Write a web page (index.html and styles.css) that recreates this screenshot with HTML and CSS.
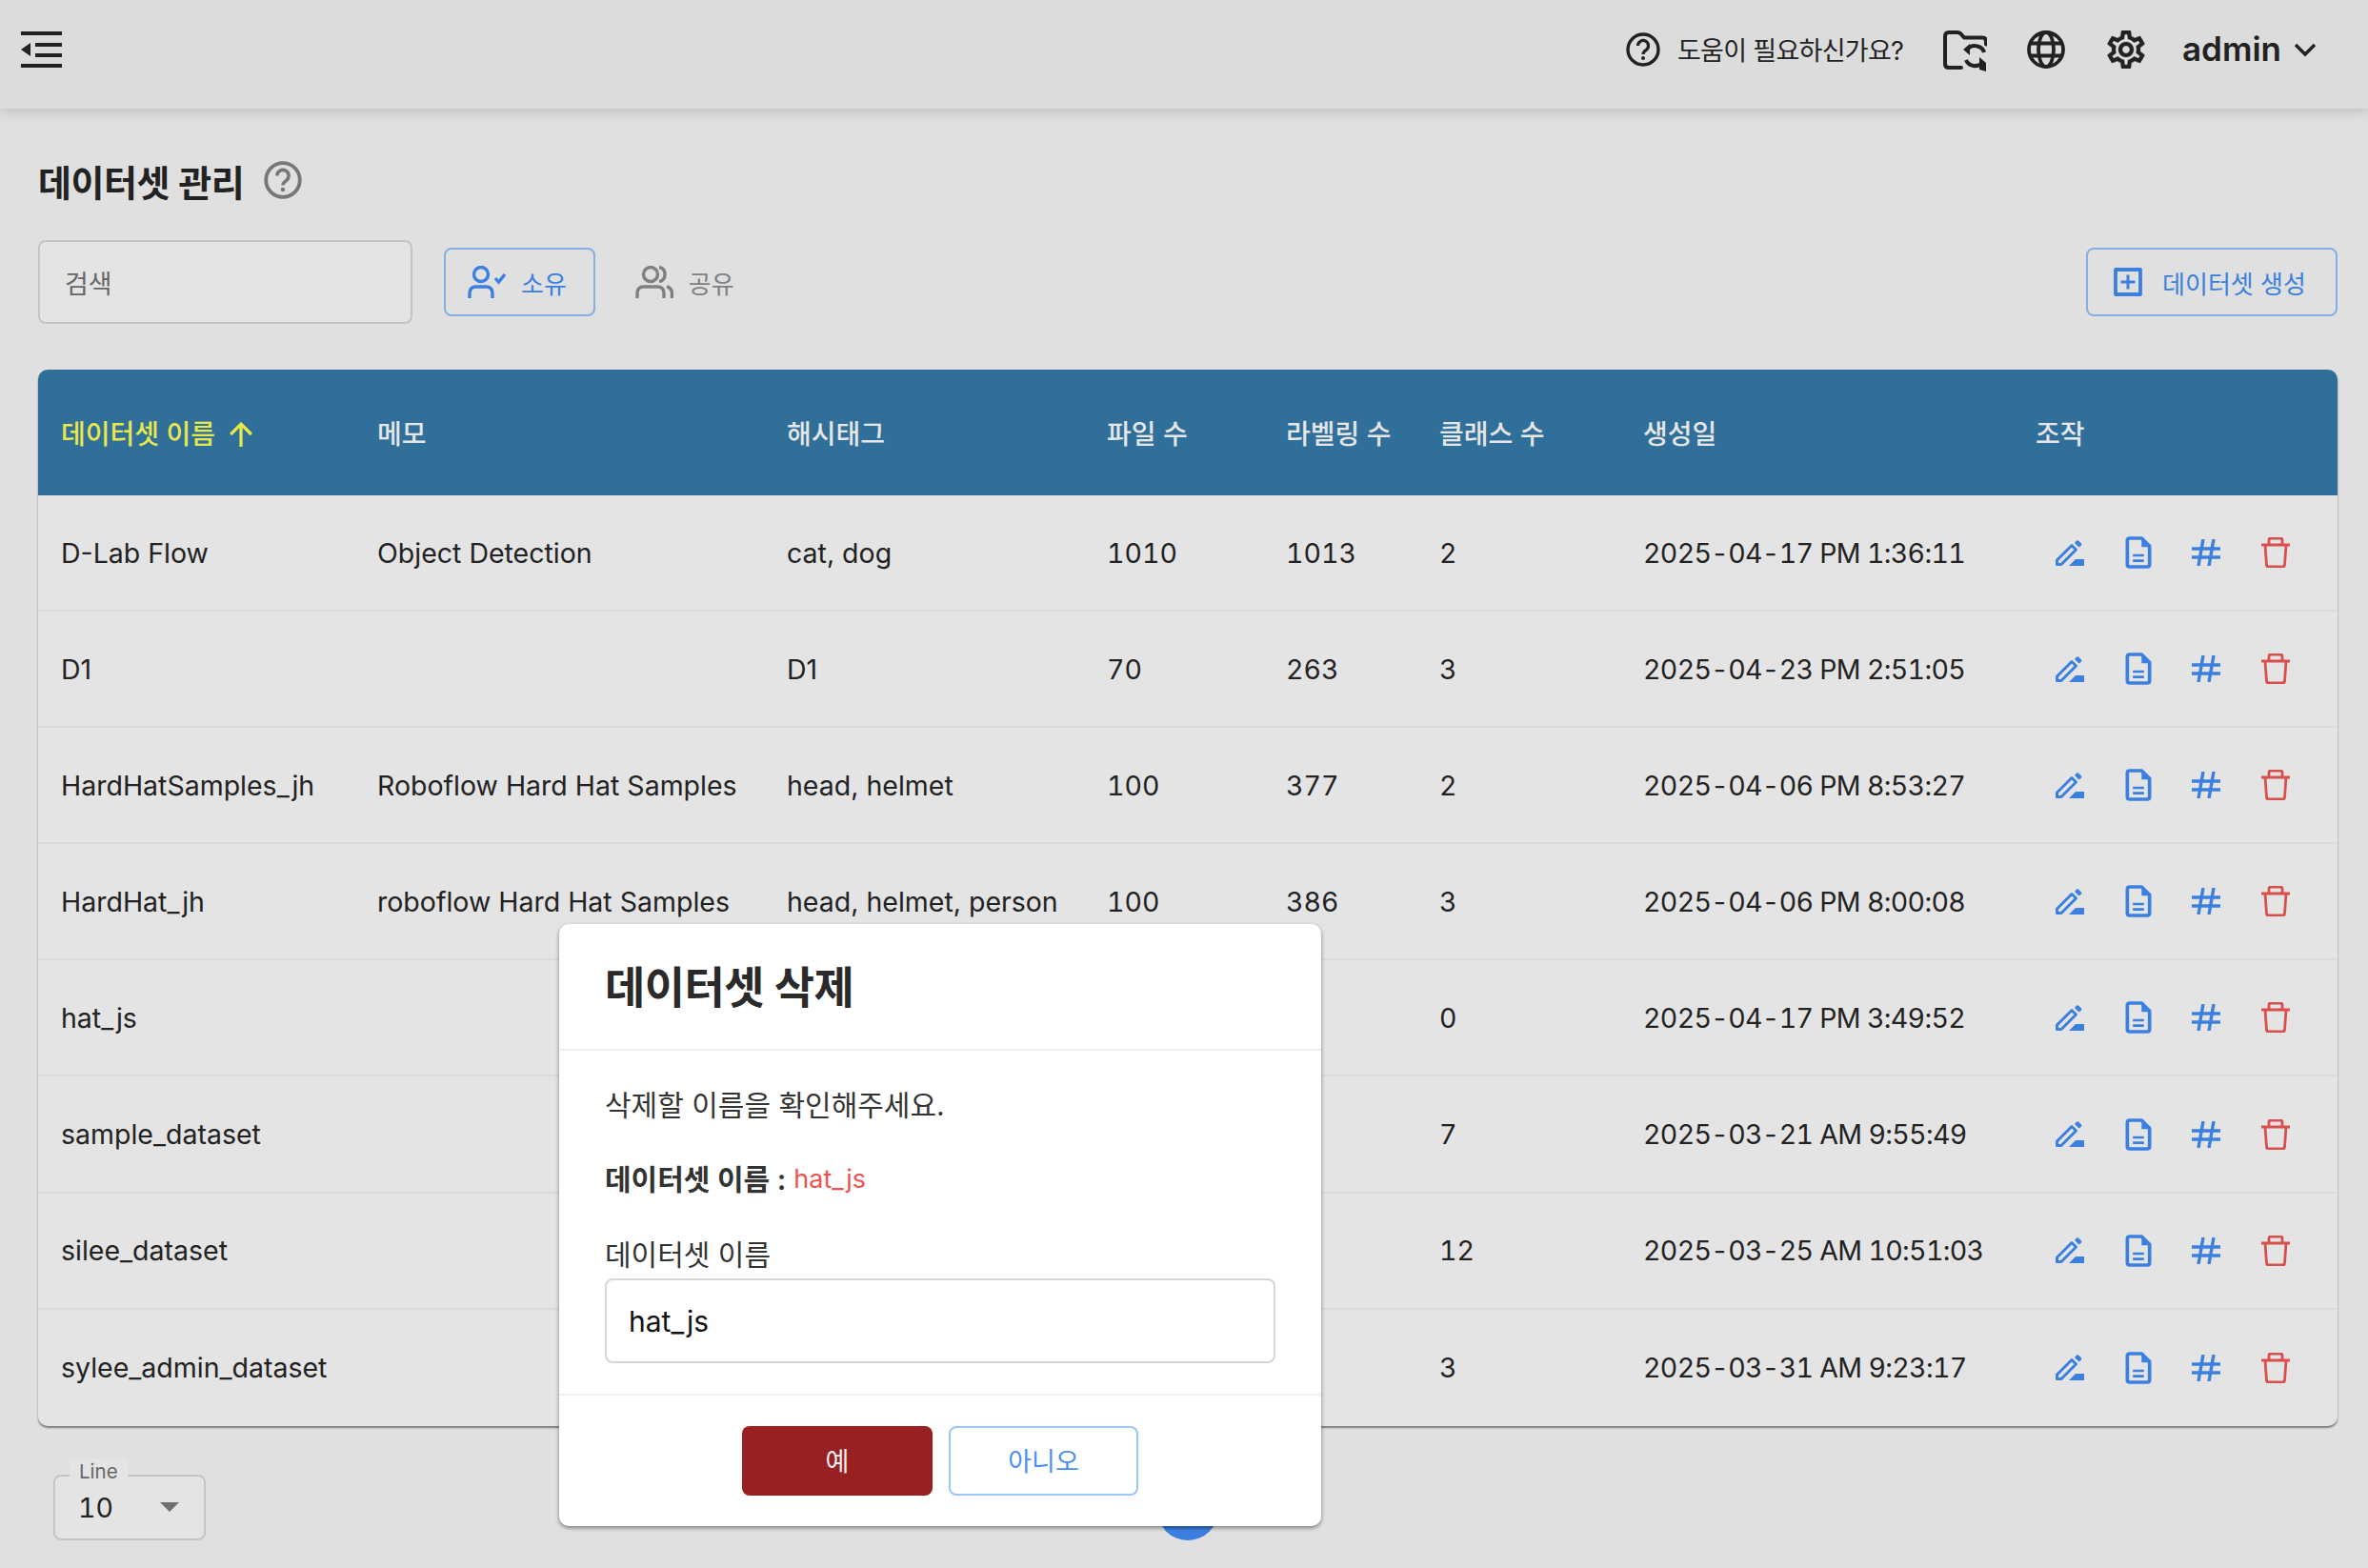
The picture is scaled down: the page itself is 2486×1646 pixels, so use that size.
FILE: index.html
```html
<!DOCTYPE html>
<html lang="ko">
<head>
  <meta charset="UTF-8">
  <title>데이터셋 관리</title>
  <link rel="stylesheet" href="styles.css">
</head>
<body>

<svg class="sprites" xmlns="http://www.w3.org/2000/svg">
  <symbol id="i-edit" viewBox="0 0 30 27">
    <path d="M1.500 25.500v-4.500L17 5.500l4.500 4.500L6 25.500z" fill="none" stroke="currentColor" stroke-width="3" stroke-linejoin="round"/>
    <path d="M20 3l2-2.400q1-.6 2 0l3 3q.6 1 0 2l-2.400 2z" fill="currentColor"/>
    <path d="M14 27l7-7h9v7z" fill="currentColor"/>
  </symbol>
  <symbol id="i-doc" viewBox="0 0 24 24">
    <path d="M14 3H6.500Q5 3 5 4.500v15Q5 21 6.500 21h11q1.500 0 1.500-1.500V8z" fill="none" stroke="currentColor" stroke-width="2.200" stroke-linejoin="round"/>
    <path d="M14 2.500L19.500 8.500H14z" fill="currentColor"/>
    <path d="M8.500 13h7v1.600h-7zM8.500 16.400h7V18h-7z" fill="currentColor"/>
  </symbol>
  <symbol id="i-hash" viewBox="0 0 30 28">
    <path d="M0 10h30M0 19h30M12 0L7 28M23 0l-5 28" fill="none" stroke="currentColor" stroke-width="3.400"/>
  </symbol>
  <symbol id="i-trash" viewBox="0 0 30 32">
    <path d="M0 8h30M4 8l1.500 21q.2 2 2 2h15q1.800 0 2-2L26 8M8 8V3q0-2 2-2h10q2 0 2 2v5" fill="none" stroke="currentColor" stroke-width="2.800" stroke-linejoin="round"/>
  </symbol>
  <symbol id="i-help" viewBox="0 0 36 36">
    <circle cx="18" cy="18" r="16" fill="none" stroke="currentColor" stroke-width="3.400"/>
    <path d="M12.500 14a5.500 5.500 0 1 1 8.500 4.600c-1.800 1.200-3 2-3 4.400" fill="none" stroke="currentColor" stroke-width="3.200"/>
    <circle cx="18" cy="27" r="2" fill="currentColor"/>
  </symbol>
</svg>

<header class="topbar">
  <svg class="menu-icon" viewBox="0 0 43 38">
    <path d="M0 0h43v4H0zM15 12h28v4H15zM15 23h28v4H15zM0 34h43v4H0zM0 19l10-7v14z" fill="#222"/>
  </svg>
  <div class="top-right">
    <svg class="top-help"><use href="#i-help"/></svg>
    <span class="help-text">도움이 필요하신가요?</span>
    <svg class="folder-icon" viewBox="0 0 46 44">
      <path d="M19 39H6q-4 0-4-4V6q0-4 4-4h9q2 0 3.500 1.500L22 7.500h19q4 0 4 4v3" fill="none" stroke="#222" stroke-width="4" stroke-linecap="round" stroke-linejoin="round"/>
      <path d="M43 23a10 9 0 0 0-17-4M24 31a10 9 0 0 0 17 3" fill="none" stroke="#222" stroke-width="4"/>
      <path d="M21 20l7-6v12zM45 34l-7-6v13l7 2z" fill="#222"/>
    </svg>
    <svg class="globe-icon" viewBox="0 0 40 40" fill="none" stroke="#222" stroke-width="3.800">
      <circle cx="20" cy="20" r="18"/>
      <ellipse cx="20" cy="20" rx="8" ry="18"/>
      <path d="M4 13.500h32M4 26.500h32"/>
    </svg>
    <svg class="gear-icon" viewBox="2 2 20 20">
      <path fill="#222" stroke="#222" stroke-width=".15" d="M19.430 12.980c.04-.32.07-.64.07-.98 0-.34-.03-.66-.07-.98l2.110-1.650c.19-.15.24-.42.12-.64l-2-3.460c-.09-.16-.26-.25-.44-.25-.06 0-.12.01-.17.03l-2.490 1c-.52-.4-1.080-.73-1.690-.98l-.38-2.650C14.460 2.180 14.250 2 14 2h-4c-.25 0-.46.18-.49.42l-.38 2.650c-.61.25-1.170.59-1.690.98l-2.490-1c-.06-.02-.12-.03-.18-.03-.17 0-.34.09-.43.25l-2 3.460c-.13.22-.07.49.12.64l2.110 1.650c-.04.32-.07.65-.07.98 0 .33.03.66.07.98l-2.110 1.650c-.19.15-.24.42-.12.64l2 3.460c.09.16.26.25.44.25.06 0 .12-.01.17-.03l2.490-1c.52.4 1.080.73 1.690.98l.38 2.650c.03.24.24.42.49.42h4c.25 0 .46-.18.49-.42l.38-2.650c.61-.25 1.170-.59 1.690-.98l2.490 1c.06.02.12.03.18.03.17 0 .34-.09.43-.25l2-3.460c.12-.22.07-.49-.12-.64l-2.110-1.650zm-1.980-1.710c.04.31.05.52.05.73 0 .21-.02.43-.05.73l-.14 1.130.89.7 1.080.84-.7 1.210-1.270-.51-1.040-.42-.9.68c-.43.32-.84.56-1.250.73l-1.060.43-.16 1.130-.2 1.350h-1.400l-.19-1.350-.16-1.130-1.060-.43c-.43-.18-.83-.41-1.230-.71l-.91-.7-1.060.43-1.270.51-.7-1.210 1.080-.84.89-.7-.14-1.130c-.03-.31-.05-.54-.05-.74s.02-.43.05-.73l.14-1.130-.89-.7-1.080-.84.7-1.210 1.270.51 1.040.42.9-.68c.43-.32.84-.56 1.250-.73l1.060-.43.16-1.130.2-1.350h1.390l.19 1.350.16 1.130 1.060.43c.43.18.83.41 1.230.71l.91.7 1.060-.43 1.270-.51.7 1.210-1.070.85-.89.7.14 1.130zM12 8c-2.210 0-4 1.790-4 4s1.790 4 4 4 4-1.790 4-4-1.790-4-4-4zm0 6c-1.100 0-2-.9-2-2s.9-2 2-2 2 .9 2 2-.9 2-2 2z"/>
    </svg>
    <span class="user-name">admin</span>
    <svg class="user-chevron" viewBox="0 0 24 15"><path d="M2 2l10 10L22 2" fill="none" stroke="#222" stroke-width="3.400"/></svg>
  </div>
</header>

<main class="content">
  <div class="title-row">
    <h1>데이터셋 관리</h1>
    <svg class="title-help"><use href="#i-help"/></svg>
  </div>

  <div class="toolbar">
    <div class="search">검색</div>
    <button class="filter filter-on">
      <svg class="user-icon" viewBox="0 0 40 34" fill="none" stroke="currentColor" stroke-width="3.400">
        <circle cx="14" cy="9" r="7.500"/>
        <path d="M2 34v-5q0-7 7-7h10q7 0 7 7v5"/>
        <path d="M29 13l3.500 4L39 9"/>
      </svg>
      소유
    </button>
    <button class="filter">
      <svg class="user-icon" viewBox="0 0 40 34" fill="none" stroke="currentColor" stroke-width="3.400">
        <circle cx="16" cy="9" r="7.500"/>
        <path d="M2 34v-5q0-7 7-7h14q7 0 7 7v5"/>
        <path d="M25 1.500q6 1 6 7.500t-6 7.500M33 22q5 1 5.500 7v5"/>
      </svg>
      공유
    </button>
    <button class="create-btn">
      <svg class="plus-icon" viewBox="0 0 30 30">
        <path d="M2 2h26v26H2z" fill="none" stroke="currentColor" stroke-width="3.800" stroke-linejoin="round"/>
        <path d="M15 7.500v15M7.500 15h15" stroke="currentColor" stroke-width="3"/>
      </svg>
      데이터셋 생성
    </button>
  </div>

  <table class="data-table">
    <colgroup>
      <col class="c-name"><col class="c-memo"><col class="c-tag"><col class="c-file">
      <col class="c-label"><col class="c-class"><col class="c-date"><col class="c-act">
    </colgroup>
    <thead>
      <tr>
        <th class="sorted">데이터셋 이름
          <svg class="sort-arrow" viewBox="0 0 24 24"><path d="M12 24V2M2 12L12 2l10 10" fill="none" stroke="currentColor" stroke-width="3"/></svg>
        </th>
        <th>메모</th><th>해시태그</th><th>파일 수</th><th>라벨링 수</th><th>클래스 수</th><th>생성일</th><th>조작</th>
      </tr>
    </thead>
    <tbody>
      <tr>
        <td>D-Lab Flow</td><td>Object Detection</td><td>cat, dog</td><td class="num">1010</td><td class="num">1013</td><td class="num">2</td><td class="num">2025-04-17 PM 1:36:11</td>
        <td><div class="actions"><svg class="a-edit"><use href="#i-edit"/></svg><svg class="a-doc"><use href="#i-doc"/></svg><svg class="a-hash"><use href="#i-hash"/></svg><svg class="a-trash"><use href="#i-trash"/></svg></div></td>
      </tr>
      <tr>
        <td>D1</td><td></td><td>D1</td><td class="num">70</td><td class="num">263</td><td class="num">3</td><td class="num">2025-04-23 PM 2:51:05</td>
        <td><div class="actions"><svg class="a-edit"><use href="#i-edit"/></svg><svg class="a-doc"><use href="#i-doc"/></svg><svg class="a-hash"><use href="#i-hash"/></svg><svg class="a-trash"><use href="#i-trash"/></svg></div></td>
      </tr>
      <tr>
        <td>HardHatSamples_jh</td><td>Roboflow Hard Hat Samples</td><td>head, helmet</td><td class="num">100</td><td class="num">377</td><td class="num">2</td><td class="num">2025-04-06 PM 8:53:27</td>
        <td><div class="actions"><svg class="a-edit"><use href="#i-edit"/></svg><svg class="a-doc"><use href="#i-doc"/></svg><svg class="a-hash"><use href="#i-hash"/></svg><svg class="a-trash"><use href="#i-trash"/></svg></div></td>
      </tr>
      <tr>
        <td>HardHat_jh</td><td>roboflow Hard Hat Samples</td><td>head, helmet, person</td><td class="num">100</td><td class="num">386</td><td class="num">3</td><td class="num">2025-04-06 PM 8:00:08</td>
        <td><div class="actions"><svg class="a-edit"><use href="#i-edit"/></svg><svg class="a-doc"><use href="#i-doc"/></svg><svg class="a-hash"><use href="#i-hash"/></svg><svg class="a-trash"><use href="#i-trash"/></svg></div></td>
      </tr>
      <tr>
        <td>hat_js</td><td></td><td></td><td></td><td></td><td class="num">0</td><td class="num">2025-04-17 PM 3:49:52</td>
        <td><div class="actions"><svg class="a-edit"><use href="#i-edit"/></svg><svg class="a-doc"><use href="#i-doc"/></svg><svg class="a-hash"><use href="#i-hash"/></svg><svg class="a-trash"><use href="#i-trash"/></svg></div></td>
      </tr>
      <tr>
        <td>sample_dataset</td><td></td><td></td><td></td><td></td><td class="num">7</td><td class="num">2025-03-21 AM 9:55:49</td>
        <td><div class="actions"><svg class="a-edit"><use href="#i-edit"/></svg><svg class="a-doc"><use href="#i-doc"/></svg><svg class="a-hash"><use href="#i-hash"/></svg><svg class="a-trash"><use href="#i-trash"/></svg></div></td>
      </tr>
      <tr>
        <td>silee_dataset</td><td></td><td></td><td></td><td></td><td class="num">12</td><td class="num">2025-03-25 AM 10:51:03</td>
        <td><div class="actions"><svg class="a-edit"><use href="#i-edit"/></svg><svg class="a-doc"><use href="#i-doc"/></svg><svg class="a-hash"><use href="#i-hash"/></svg><svg class="a-trash"><use href="#i-trash"/></svg></div></td>
      </tr>
      <tr>
        <td>sylee_admin_dataset</td><td></td><td></td><td></td><td></td><td class="num">3</td><td class="num">2025-03-31 AM 9:23:17</td>
        <td><div class="actions"><svg class="a-edit"><use href="#i-edit"/></svg><svg class="a-doc"><use href="#i-doc"/></svg><svg class="a-hash"><use href="#i-hash"/></svg><svg class="a-trash"><use href="#i-trash"/></svg></div></td>
      </tr>
    </tbody>
  </table>

  <div class="table-foot">
    <div class="line-select">
      <span class="line-label">Line</span>
      <span class="line-value">10</span>
      <span class="line-caret"></span>
    </div>
    <div class="page-dot"></div>
  </div>
</main>

<div class="modal">
  <h2 class="modal-title">데이터셋 삭제</h2>
  <div class="modal-body">
    <p class="modal-msg">삭제할 이름을 확인해주세요.</p>
    <p class="modal-name"><b>데이터셋 이름 :</b> <span class="modal-red">hat_js</span></p>
    <div class="modal-label">데이터셋 이름</div>
    <div class="modal-input">hat_js</div>
  </div>
  <div class="modal-foot">
    <button class="btn-yes">예</button>
    <button class="btn-no">아니오</button>
  </div>
</div>

</body>
</html>
```

FILE: styles.css
```css
* { box-sizing: border-box; }
html, body { height: 100%; }
body { margin: 0; background: #e0e0e0; color: #222; font-family: Inter, "Noto Sans CJK KR", sans-serif; overflow: hidden; position: relative; }
svg { display: block; flex: none; }
button { font-family: inherit; cursor: pointer; }
.sprites { width: 0; height: 0; position: absolute; }

/* top bar */
.topbar { height: 114px; background: #dcdcdc; display: flex; align-items: center; justify-content: space-between; padding: 0 54px 0 22px; box-shadow: 0 3px 12px rgba(0,0,0,.16); }
.menu-icon { width: 43px; height: 38px; margin-top: -10px; }
.top-right { display: flex; align-items: center; margin-top: -10px; }
.top-help { width: 36px; height: 36px; color: #222; }
.help-text { font-size: 27px; margin-left: 18px; width: 279px; letter-spacing: -.7px; margin-top: -2px; }
.folder-icon { width: 46px; height: 44px; margin-top: 4px; }
.globe-icon { width: 40px; height: 40px; margin-left: 42px; }
.gear-icon { width: 40px; height: 40px; margin-left: 44px; }
.user-name { font-size: 35px; font-weight: 600; margin-left: 39px; margin-top: -2px; }
.user-chevron { width: 24px; height: 15px; margin-left: 13px; }

/* page */
.content { padding: 0 32px 0 40px; }
.title-row { display: flex; align-items: center; margin-top: 55px; height: 40px; }
h1 { font-size: 38px; font-weight: 600; margin: 0; letter-spacing: -.45px; }
.title-help { width: 40px; height: 40px; margin-left: 21px; color: #777; }

.toolbar { display: flex; align-items: center; margin-top: 43px; height: 88px; }
.search { width: 393px; height: 88px; background: #e4e4e4; border: 2px solid #c4c4c4; border-radius: 8px; padding-left: 26px; display: flex; align-items: center; font-size: 27px; color: #666; }
.filter { height: 72px; margin-left: 33px; padding: 0 28px 0 23px; display: flex; align-items: center; gap: 16px; font-size: 26px; background: none; border: 2px solid transparent; border-radius: 8px; color: #808080; }
.filter-on { color: #3b80e0; border-color: #85ade8; }
.filter + .filter { margin-left: 0; padding-left: 40px; }
.user-icon { width: 40px; height: 34px; }
.create-btn { margin-left: auto; width: 264px; height: 72px; display: flex; align-items: center; justify-content: center; gap: 21px; background: none; border: 2px solid #85ade8; border-radius: 8px; color: #3b80e0; font-size: 26px; white-space: nowrap; padding: 0 4px 0 0; }
.plus-icon { width: 30px; height: 30px; }

/* table */
.data-table { width: 2414px; margin-top: 48px; border-collapse: separate; border-spacing: 0; table-layout: fixed; background: #e4e4e4; border-radius: 10px; box-shadow: 0 2px 2px rgba(0,0,0,.45); }
.c-name { width: 332px; } .c-memo { width: 430px; } .c-tag { width: 336px; } .c-file { width: 188px; }
.c-label { width: 161px; } .c-class { width: 214px; } .c-date { width: 412px; } .c-act { width: 341px; }
th { height: 132px; background: #316f9b; color: #e6e6e6; font-size: 28px; font-weight: 500; text-align: left; padding: 0 0 0 24px; white-space: nowrap; }
th:first-child { border-top-left-radius: 10px; }
th:last-child { border-top-right-radius: 10px; }
th.sorted { color: #e8e84a; }
.sort-arrow { display: inline-block; width: 26px; height: 26px; margin-left: 6px; vertical-align: -3px; }
td { height: 122.100px; padding: 0 0 0 24px; font-size: 28.500px; color: #222; border-bottom: 2px solid #dadada; white-space: nowrap; }
td.num { font-variant-numeric: tabular-nums; }
td:nth-child(7) { letter-spacing: -.65px; }
tbody tr:last-child td { border-bottom: 0; }
.actions { display: flex; align-items: center; color: #3b80e0; margin-left: 21px; }
.actions svg { margin-right: 42px; }
.a-edit { width: 30px; height: 27px; }
.a-doc { width: 40px; height: 40px; margin-left: -5px; margin-right: 36px !important; }
.a-hash { width: 30px; height: 28px; }
.a-trash { width: 30px; height: 32px; color: #d8504c; margin-left: 1px; }

.table-foot { display: grid; grid-template-columns: 1fr auto 1fr; margin-top: 51px; }
.line-select { width: 160px; height: 69px; margin-left: 16px; position: relative; background: #e4e4e4; border: 2px solid #c4c4c4; border-radius: 8px; display: flex; align-items: center; padding-left: 24px; font-size: 28.500px; }
.line-label { position: absolute; left: 15px; top: -19px; height: 26px; padding: 0 10px; background: #e4e4e4; font-size: 20.500px; color: #666; line-height: 28px; }
.line-value { color: #222; font-variant-numeric: tabular-nums; }
.line-caret { position: absolute; right: 26px; top: 27px; border-left: 10px solid transparent; border-right: 10px solid transparent; border-top: 10px solid #707070; }
.page-dot { grid-column: 2; width: 64px; height: 64px; margin-top: 5px; border-radius: 50%; background: #3b80e0; }

/* delete dialog */
.modal { position: absolute; left: 587px; top: 970px; width: 800px; height: 632px; background: #fff; border-radius: 10px; box-shadow: 0 2px 4px rgba(0,0,0,.45); display: flex; flex-direction: column; }
.modal-title { height: 133px; margin: 0; padding: 0 48px 5px; display: flex; align-items: center; font-size: 46px; font-weight: 600; color: #2a2a2a; border-bottom: 2px solid #f0f0f0; letter-spacing: -.6px; }
.modal-body { height: 362px; padding: 0 48px; border-bottom: 2px solid #f0f0f0; }
.modal-msg { margin: 37px 0 0; font-size: 30px; line-height: 40px; color: #333; }
.modal-name { margin: 37px 0 0; font-size: 30px; line-height: 42px; color: #333; display: flex; align-items: center; gap: 8px; }
.modal-name b { font-weight: 600; }
.modal-red { color: #ef5350; font-size: 27px; }
.modal-label { margin-top: 38px; font-size: 30px; line-height: 40px; color: #333; }
.modal-input { width: 704px; height: 89px; margin-top: 5px; border: 2px solid #d6d6d6; border-radius: 8px; display: flex; align-items: center; padding-left: 23px; font-size: 30px; color: #111; }
.modal-foot { flex: 1; display: flex; justify-content: center; align-items: flex-start; gap: 17px; padding-top: 32px; }
.btn-yes { width: 200px; height: 73px; background: #992020; color: #f0f0f0; border: 0; border-radius: 8px; font-size: 27px; padding: 0 0 3px; }
.btn-no { width: 199px; height: 73px; background: #fff; color: #4a90f0; border: 2px solid #9ac6fa; border-radius: 8px; font-size: 27px; padding: 0 0 3px; }
```
